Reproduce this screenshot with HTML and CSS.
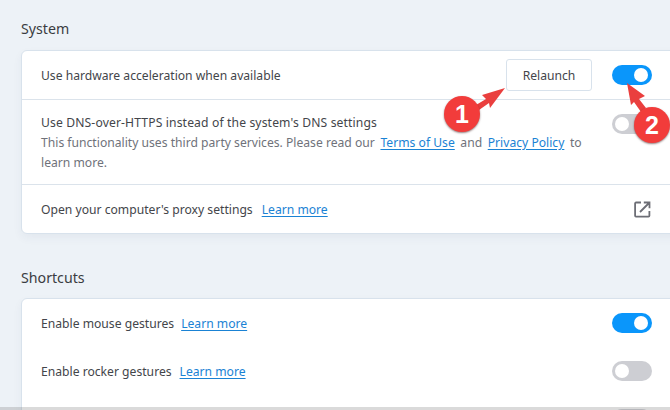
FILE: index.html
```html
<!DOCTYPE html>
<html lang="en">
<head>
<meta charset="utf-8">
<title>Settings</title>
<link rel="stylesheet" href="styles.css">
</head>
<body>
<main class="page">
  <section class="section">
    <h2 class="title">System</h2>
    <div class="card">
      <div class="row">
        <span class="label">Use hardware acceleration when available</span>
        <button class="btn">Relaunch</button>
        <span class="toggle on"></span>
      </div>
      <div class="row tall">
        <div class="stack">
          <div class="dns">Use DNS-over-HTTPS instead of the system's DNS settings</div>
          <div class="sub line tight"><span>This functionality uses third party services. Please read our</span><a class="lnk">Terms of Use</a><span>and</span><a class="lnk">Privacy Policy</a><span>to</span></div>
          <div class="sub">learn more.</div>
        </div>
        <span class="toggle"></span>
      </div>
      <div class="row">
        <div class="label line wide"><span>Open your computer's proxy settings</span><a class="lnk">Learn more</a></div>
        <svg class="ext" width="17" height="17" viewBox="0 0 17 17" fill="none" stroke="#6d6e76" stroke-width="1.8">
          <path d="M7 1.5H2a.9.9 0 0 0-.9.9v12.4c0 .5.4.9.9.9h12.5c.5 0 .9-.4.9-.9V10"/>
          <path d="M6 11l9-9M9.800 1.500h5.700v5.700"/>
        </svg>
      </div>
    </div>
  </section>
  <section class="section second">
    <h2 class="title">Shortcuts</h2>
    <div class="card">
      <div class="row plain">
        <div class="label line narrow"><span>Enable mouse gestures</span><a class="lnk">Learn more</a></div>
        <span class="toggle on"></span>
      </div>
      <div class="row plain">
        <div class="label line"><span>Enable rocker gestures</span><a class="lnk">Learn more</a></div>
        <span class="toggle"></span>
      </div>
      <div class="row plain">
        <span class="label"></span>
        <span class="toggle"></span>
      </div>
    </div>
  </section>
</main>
<svg class="arrows" width="670" height="410" viewBox="0 0 670 410">
  <path d="M505 88L482 95L486 99L476 105L479 110L489 103L490 108Z" fill="#ea3f3e"/>
  <path d="M627 83L645 96L639 99L646 108L641 112L634 102L631 105Z" fill="#ea3f3e"/>
</svg>
<span class="badge one">1</span>
<span class="badge two">2</span>
<div class="hbar"></div>
</body>
</html>
```
FILE: styles.css
```css
* { box-sizing: border-box; }
html, body { margin: 0; height: 410px; overflow: hidden; }
body {
  width: 670px;
  position: relative;
  background: #edf2f7;
  font-family: "Noto Sans", "Open Sans", sans-serif;
  font-size: 12.15px;
  color: #43454a;
}
.page { height: 410px; overflow: hidden; padding: 19px 0 0 21px; }
.section { margin-right: -20px; }
.section.second { margin-top: 34px; }
.title {
  margin: 0 0 12px;
  height: 19px;
  line-height: 19px;
  font-size: 14.2px;
  font-weight: 400;
  color: #3a3c41;
}
.second .title { margin-bottom: 11px; }
.card {
  background: #fff;
  border: 1px solid #d8e2ec;
  border-radius: 6px;
  box-shadow: 0 4px 10px rgba(40, 60, 90, .05);
}
.row {
  display: flex;
  align-items: center;
  height: 49px;
  padding: 0 37px 0 19px;
  border-bottom: 1px solid #dbe3eb;
}
.row:last-child { border-bottom: 0; height: 48px; }
.row.tall { height: 85px; align-items: flex-start; padding-top: 13px; }
.row.plain { border-bottom: 0; height: 48px; }
.label { flex: 1; line-height: 20px; padding-top: 2px; }
.line { display: flex; gap: 8px; white-space: nowrap; }
.line.tight { gap: 5.6px; }
.line.wide { gap: 9px; }
.line.narrow { gap: 7px; }
.stack { width: 545px; margin-right: auto; line-height: 20px; }
.dns { letter-spacing: .13px; }
.sub { color: #6f727a; }
.lnk {
  color: #1a82d4;
  text-decoration: underline;
  text-underline-offset: 2px;
}
.btn {
  width: 86px;
  height: 32px;
  margin-right: 20px;
  background: #fff;
  border: 1px solid #d8e2ec;
  border-radius: 3px;
  font: inherit;
  color: #43454a;
}
.toggle {
  flex: none;
  position: relative;
  width: 40px;
  height: 20px;
  border-radius: 10px;
  background: #cdced3;
}
.toggle::after {
  content: "";
  position: absolute;
  top: 3px;
  left: 3px;
  width: 14px;
  height: 14px;
  border-radius: 50%;
  background: #fff;
}
.toggle.on { background: #0a96fb; }
.toggle.on::after { left: 22px; }
.tall .toggle { margin-top: 1px; }
.ext { flex: none; margin-right: 1px; }
.arrows { position: absolute; left: 0; top: 0; pointer-events: none; }
.badge {
  position: absolute;
  width: 36px;
  height: 36px;
  border-radius: 50%;
  background: #f23c3b;
  box-shadow: 0 1px 2px rgba(60, 20, 20, .55);
  color: #fff;
  font-family: "Liberation Sans", Arial, sans-serif;
  font-weight: 700;
  font-size: 25px;
  line-height: 36px;
  text-align: center;
}
.badge.one { left: 444px; top: 96px; }
.badge.two { left: 634px; top: 107px; }
.hbar { position: absolute; left: 0; right: 0; bottom: 0; height: 3px; background: rgba(120, 120, 120, .27); }
```
